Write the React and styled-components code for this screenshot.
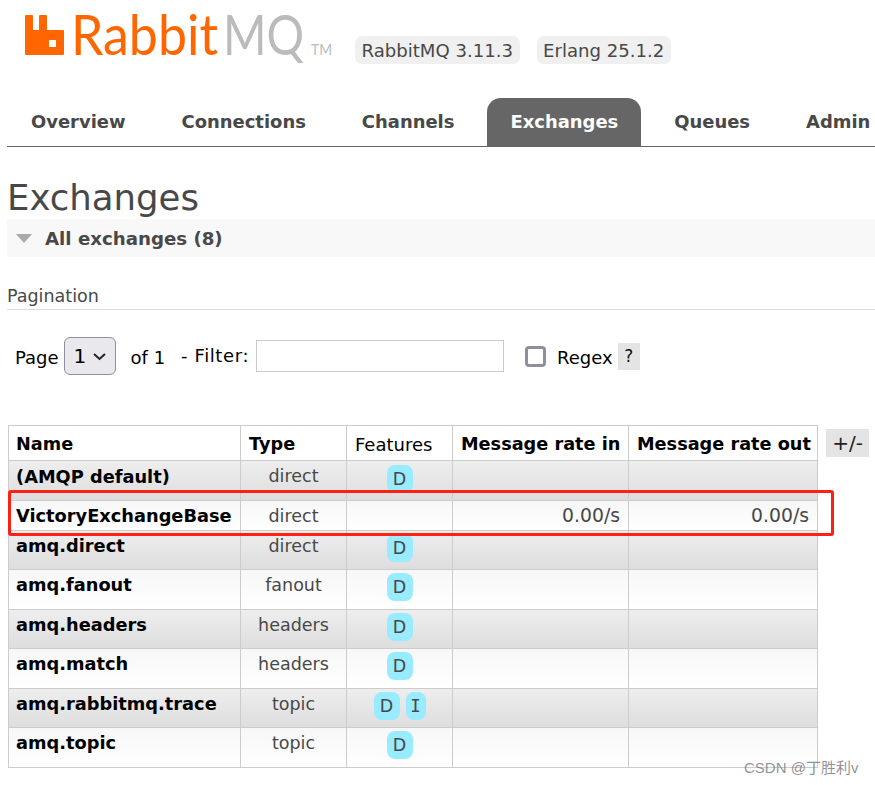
import React from 'react';
import styled, { createGlobalStyle } from 'styled-components';

const GlobalStyle = createGlobalStyle`
    html, body {
        margin: 0;
        padding: 0;
        background: #fff;
    }
    body {
        font-family: "DejaVu Sans", Verdana, sans-serif;
        color: #484848;
        overflow: hidden;
    }
`

const tabs = ['Overview', 'Connections', 'Channels', 'Exchanges', 'Queues', 'Admin']

const rows = [
    { name: '(AMQP default)', type: 'direct', features: ['D'], height: 40, odd: true, first: true },
    { name: 'VictoryExchangeBase', type: 'direct', features: [], rateIn: '0.00/s', rateOut: '0.00/s', height: 30, middle: true },
    { name: 'amq.direct', type: 'direct', features: ['D'], height: 39, odd: true },
    { name: 'amq.fanout', type: 'fanout', features: ['D'], height: 40 },
    { name: 'amq.headers', type: 'headers', features: ['D'], height: 39, odd: true },
    { name: 'amq.match', type: 'headers', features: ['D'], height: 40 },
    { name: 'amq.rabbitmq.trace', type: 'topic', features: ['D', 'I'], height: 39, odd: true },
    { name: 'amq.topic', type: 'topic', features: ['D'], height: 40 },
]

const Logo = () => (
    <LogoSvg viewBox='0 0 315 50' aria-label='RabbitMQ'>
        <path fill='#f60' fillRule='evenodd' d='M1 2q0-1 1-1h6q1 0 1 1v14h6V2q0-1 1-1h6q1 0 1 1v14h16q1 0 1 1v23q0 1-1 1H2q-1 0-1-1ZM25 26v7h7v-7Z' />
        <text x='47' y='41' fontFamily='Lato, sans-serif' fontSize='57' fill='#f60' textLength='147' lengthAdjust='spacingAndGlyphs'>Rabbit</text>
        <text x='199' y='41' fontFamily='Lato, sans-serif' fontSize='57' fill='#bbb' textLength='81' lengthAdjust='spacingAndGlyphs'>MQ</text>
        <text x='287' y='41' fontFamily='Lato, sans-serif' fontSize='16' fill='#bbb' textLength='21' lengthAdjust='spacingAndGlyphs'>TM</text>
    </LogoSvg>
)

const App = () => {
    return (
        <Page>
            <GlobalStyle />
            <Header>
                <Logo />
                <Badge>RabbitMQ 3.11.3</Badge>
                <Badge>Erlang 25.1.2</Badge>
            </Header>
            <Nav>
                {tabs.map((tab) => (
                    <Tab key={tab} $active={tab === 'Exchanges'}>{tab}</Tab>
                ))}
            </Nav>
            <Title>Exchanges</Title>
            <SectionBar>
                <Triangle />
                All exchanges (8)
            </SectionBar>
            <SubTitle>Pagination</SubTitle>
            <FilterRow>
                <PageLabel>Page</PageLabel>
                <PageSelect>
                    1
                    <svg width='15' height='9' viewBox='0 0 15 9' fill='none' stroke='#222' strokeWidth='2'>
                        <path d='M2 2l5.500 5 5.500-5' />
                    </svg>
                </PageSelect>
                <OfLabel>of 1</OfLabel>
                <FilterLabel>- Filter:</FilterLabel>
                <FilterInput />
                <RegexCheck />
                <PageLabel>Regex</PageLabel>
                <HelpBox>?</HelpBox>
            </FilterRow>
            <TableArea>
                <Table>
                    <colgroup>
                        <col width='232' />
                        <col width='106' />
                        <col width='106' />
                        <col width='176' />
                        <col width='189' />
                    </colgroup>
                    <thead>
                        <tr>
                            <Head>Name</Head>
                            <Head>Type</Head>
                            <Head $plain>Features</Head>
                            <Head>Message rate in</Head>
                            <Head>Message rate out</Head>
                        </tr>
                    </thead>
                    <tbody>
                        {rows.map((row) => (
                            <Row key={row.name} $odd={row.odd} $height={row.height}>
                                <NameCell $middle={row.middle} $first={row.first}>{row.name}</NameCell>
                                <TypeCell $middle={row.middle}>{row.type}</TypeCell>
                                <FeatureCell $first={row.first}>
                                    <FeatureWrap>
                                        {row.features.map((f) => <Feature key={f} $narrow={f === 'I'}>{f}</Feature>)}
                                    </FeatureWrap>
                                </FeatureCell>
                                <RateCell>{row.rateIn}</RateCell>
                                <RateCell>{row.rateOut}</RateCell>
                            </Row>
                        ))}
                    </tbody>
                </Table>
                <ColumnsToggle>+/-</ColumnsToggle>
                <Highlight />
            </TableArea>
            <Watermark>CSDN @丁胜利v</Watermark>
        </Page>
    );
}

const Page = styled.div`
    position: relative;
    width: 875px;
    height: 785px;
    overflow: hidden;
`

const Header = styled.div`
    display: flex;
    align-items: flex-start;
    height: 98px;
    padding-left: 24px;
    box-sizing: border-box;
`

const LogoSvg = styled.svg`
    width: 315px;
    height: 50px;
    margin-top: 14px;
    margin-right: 16px;
    flex: none;
    overflow: visible;
`

const Badge = styled.div`
    margin-top: 36px;
    margin-right: 17px;
    padding: 0 6.500px;
    height: 28px;
    line-height: 29px;
    font-size: 18.100px;
    background: #f0f0f0;
    border-radius: 7px;
    color: #484848;
    white-space: nowrap;
`

const Nav = styled.div`
    display: flex;
    gap: 10px;
    height: 48px;
    margin-left: 7px;
    padding-left: 1px;
    border-bottom: 1px solid #666;
    white-space: nowrap;
`

const Tab = styled.div`
    height: 48px;
    padding: 0 23px;
    line-height: 48px;
    font-size: 17.950px;
    font-weight: bold;
    border-radius: 14px 14px 0 0;
    color: ${(p) => (p.$active ? '#fff' : '#484848')};
    background: ${(p) => (p.$active ? '#666' : 'transparent')};
`

const Title = styled.h1`
    margin: 0 0 0 7px;
    height: 72px;
    padding-top: 30px;
    box-sizing: border-box;
    font-size: 35.500px;
    line-height: 42px;
    font-weight: normal;
    color: #484848;
`

const SectionBar = styled.div`
    display: flex;
    align-items: center;
    gap: 13px;
    height: 38px;
    margin-left: 7px;
    padding-left: 9px;
    background: #f8f8f8;
    font-size: 18.200px;
    font-weight: bold;
    color: #484848;
`

const Triangle = styled.span`
    width: 0;
    height: 0;
    border-left: 8.500px solid transparent;
    border-right: 8.500px solid transparent;
    border-top: 9px solid #aaa;
`

const SubTitle = styled.div`
    margin: 28px 0 0 7px;
    height: 24px;
    padding-left: 0;
    font-size: 17.500px;
    line-height: 22px;
    color: #484848;
    border-bottom: 1px solid #ddd;
`

const FilterRow = styled.div`
    display: flex;
    align-items: center;
    height: 38px;
    margin-top: 27px;
    padding-left: 15px;
    font-size: 18px;
    color: #000;
`

const PageLabel = styled.span`
    margin-top: 3px;
`

const PageSelect = styled.div`
    display: flex;
    align-items: center;
    justify-content: space-between;
    width: 52px;
    height: 38px;
    margin-left: 5px;
    padding: 0 8px 0 9px;
    box-sizing: border-box;
    background: #e9e9ed;
    border: 1px solid #8f8f9d;
    border-radius: 6px;
    font-size: 20px;
`

const OfLabel = styled.span`
    margin-left: 15px;
    margin-top: 2px;
`

const FilterLabel = styled.span`
    margin-left: 16px;
    margin-top: -2px;
    letter-spacing: 0.600px;
    white-space: nowrap;
`

const FilterInput = styled.div`
    width: 248px;
    height: 32px;
    margin-left: 7px;
    box-sizing: border-box;
    border: 1px solid #ccc;
`

const RegexCheck = styled.div`
    width: 21px;
    height: 21px;
    margin-left: 21px;
    margin-right: 11px;
    box-sizing: border-box;
    border: 3px solid #8f8f9d;
    border-radius: 4px;
`

const HelpBox = styled.div`
    width: 22px;
    height: 27px;
    margin-left: 5px;
    background: #e4e4e4;
    color: #111;
    font-size: 17px;
    line-height: 27px;
    text-align: center;
`

const TableArea = styled.div`
    position: relative;
    display: flex;
    align-items: flex-start;
    gap: 8px;
    margin-top: 50px;
    margin-left: 8px;
`

const Table = styled.table`
    border-collapse: collapse;
    table-layout: fixed;
    width: 809px;
    flex: none;
    font-size: 17.800px;

    td, th {
        border: 1px solid #ccc;
        padding: 0 8px;
        box-sizing: border-box;
        overflow: hidden;
        white-space: nowrap;
    }

    th:first-child {
        padding-left: 7px;
    }
`

const Head = styled.th`
    height: 35px;
    text-align: left;
    color: #000;
    font-weight: ${(p) => (p.$plain ? 'normal' : 'bold')};
    font-size: ${(p) => (p.$plain ? '18px' : '17.700px')};
    padding-top: 2px !important;
`

const Row = styled.tr`
    height: ${(p) => p.$height}px;
    background: ${(p) => (p.$odd
        ? 'linear-gradient(#eee, #ddd)'
        : 'linear-gradient(#f7f7f7, #fff)')};
`

const NameCell = styled.td`
    font-weight: bold;
    color: #000;
    padding-left: 7px !important;
    vertical-align: ${(p) => (p.$middle ? 'middle' : 'top')};
    padding-top: ${(p) => (p.$middle ? '0' : p.$first ? '5px' : '4px')} !important;
`

const TypeCell = styled.td`
    text-align: center;
    font-size: 17.500px;
    color: #484848;
    vertical-align: ${(p) => (p.$middle ? 'middle' : 'top')};
    padding-top: ${(p) => (p.$middle ? '0' : '5px')} !important;
`

const FeatureCell = styled.td`
    vertical-align: top;
    padding: ${(p) => (p.$first ? '4px' : '3px')} 0 0 !important;
`

const FeatureWrap = styled.div`
    display: flex;
    justify-content: center;
    gap: 6px;
`

const Feature = styled.span`
    width: ${(p) => (p.$narrow ? '20px' : '26px')};
    height: 28px;
    line-height: 29px;
    text-align: center;
    font-family: ${(p) => (p.$narrow ? '"DejaVu Sans Mono", monospace' : 'inherit')};
    font-size: 17.500px;
    color: #484848;
    background: #99ebff;
    border-radius: 8px;
`

const RateCell = styled.td`
    text-align: right;
    font-size: 18.800px;
    color: #484848;
`

const ColumnsToggle = styled.div`
    width: 43px;
    height: 28px;
    margin-top: 4px;
    background: #e4e4e4;
    color: #222;
    font-size: 20px;
    line-height: 28px;
    text-align: center;
`

const Highlight = styled.div`
    position: absolute;
    left: 0;
    top: 65px;
    width: 826px;
    height: 46px;
    box-sizing: border-box;
    border: 3px solid #ff2015;
    border-radius: 3px;
    pointer-events: none;
`

const Watermark = styled.div`
    position: absolute;
    left: 744px;
    top: 759px;
    font-family: "Liberation Sans", "Noto Sans CJK SC", sans-serif;
    font-size: 15px;
    line-height: 18px;
    color: rgba(110, 110, 110, 0.75);
    white-space: nowrap;
`

export default App;
